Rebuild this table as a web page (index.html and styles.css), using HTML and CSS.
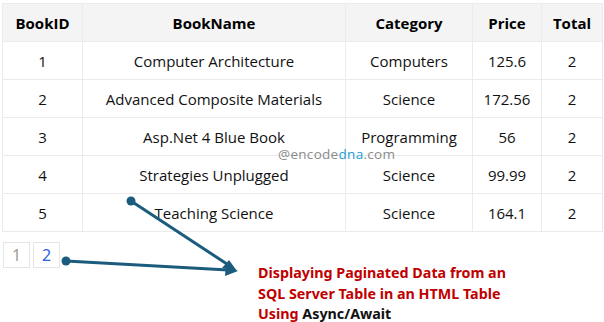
FILE: index.html
```html
<!DOCTYPE html>
<html>
<head>
<meta charset="utf-8">
<link rel="stylesheet" href="styles.css">
</head>
<body>
<div class="page">
  <table class="books">
    <colgroup>
      <col class="c1"><col class="c2"><col class="c3"><col class="c4"><col class="c5">
    </colgroup>
    <thead>
      <tr><th>BookID</th><th>BookName</th><th>Category</th><th>Price</th><th>Total</th></tr>
    </thead>
    <tbody>
      <tr><td>1</td><td>Computer Architecture</td><td>Computers</td><td>125.6</td><td>2</td></tr>
      <tr><td>2</td><td>Advanced Composite Materials</td><td>Science</td><td>172.56</td><td>2</td></tr>
      <tr><td>3</td><td>Asp.Net 4 Blue Book</td><td>Programming</td><td>56</td><td>2</td></tr>
      <tr><td>4</td><td>Strategies Unplugged</td><td>Science</td><td>99.99</td><td>2</td></tr>
      <tr><td>5</td><td>Teaching Science</td><td>Science</td><td>164.1</td><td>2</td></tr>
    </tbody>
  </table>
  <div class="watermark">@encode<span class="dna">dna</span>.com</div>
  <div class="bottom">
    <div class="pager">
      <span class="pg pg-current">1</span>
      <span class="pg pg-link">2</span>
    </div>
    <p class="caption">Displaying Paginated Data from an SQL Server Table in an HTML Table Using <span class="plain">Async/Await</span></p>
  </div>
  <svg class="arrows" width="604" height="322" viewBox="0 0 604 322">
    <g stroke="#1b5b7d" stroke-width="3" fill="none" stroke-linecap="round">
      <line x1="131" y1="201" x2="230" y2="266"/>
      <line x1="66" y1="261" x2="228" y2="270"/>
    </g>
    <g fill="#1b5b7d">
      <circle cx="131" cy="201" r="4.5"/>
      <circle cx="66" cy="261" r="4.5"/>
      <polygon points="237,271 222,268 229,260"/>
      <polygon points="238,271 226,265 225,276"/>
    </g>
  </svg>
</div>
</body>
</html>
```
FILE: styles.css
```css
html, body {
  margin: 0;
  padding: 0;
  background: #fff;
}
.page {
  position: relative;
  width: 604px;
  height: 322px;
  padding: 3px 2px 0 2px;
  box-sizing: border-box;
  font-family: "Open Sans", "Noto Sans", sans-serif;
  color: #111;
}
.books {
  border-collapse: collapse;
  table-layout: fixed;
  width: 600px;
  border: 1px solid #e8e8e8;
  font-size: 15px;
}
.c1 { width: 80px; }
.c2 { width: 263px; }
.c3 { width: 127px; }
.c4 { width: 69px; }
.c5 { width: 61px; }
.books th, .books td {
  border: 1px solid #ebebeb;
  height: 38px;
  padding: 0;
  text-align: center;
  white-space: nowrap;
  font-weight: 400;
  box-sizing: border-box;
}
.books td {
  padding-top: 1px;
}
.books th {
  background: #f4f4f4;
  font-weight: 700;
  font-size: 15px;
  color: #000;
}
.watermark {
  position: absolute;
  left: 278px;
  top: 145px;
  font-size: 13.5px;
  color: #8a8a8a;
  letter-spacing: 0.3px;
}
.dna { color: #1a9ad8; }
.bottom {
  display: flex;
  margin-top: 10px;
}
.pager {
  display: flex;
  gap: 3px;
  margin-left: 1px;
  align-self: flex-start;
}
.pg {
  display: flex;
  align-items: center;
  justify-content: center;
  width: 25px;
  height: 24px;
  border: 1px solid #e6e6e6;
  font-size: 16px;
  font-family: "Noto Sans", sans-serif;
}
.pg-current { color: #a49a94; }
.pg-link { color: #2a5fe6; }
.caption {
  margin: 21px 0 0 198px;
  width: 270px;
  font-family: "Noto Sans", sans-serif;
  font-weight: 700;
  font-size: 14.3px;
  line-height: 20.5px;
  color: #c00000;
}
.plain { color: #111; }
.arrows {
  position: absolute;
  left: 0;
  top: 0;
  pointer-events: none;
}
```
